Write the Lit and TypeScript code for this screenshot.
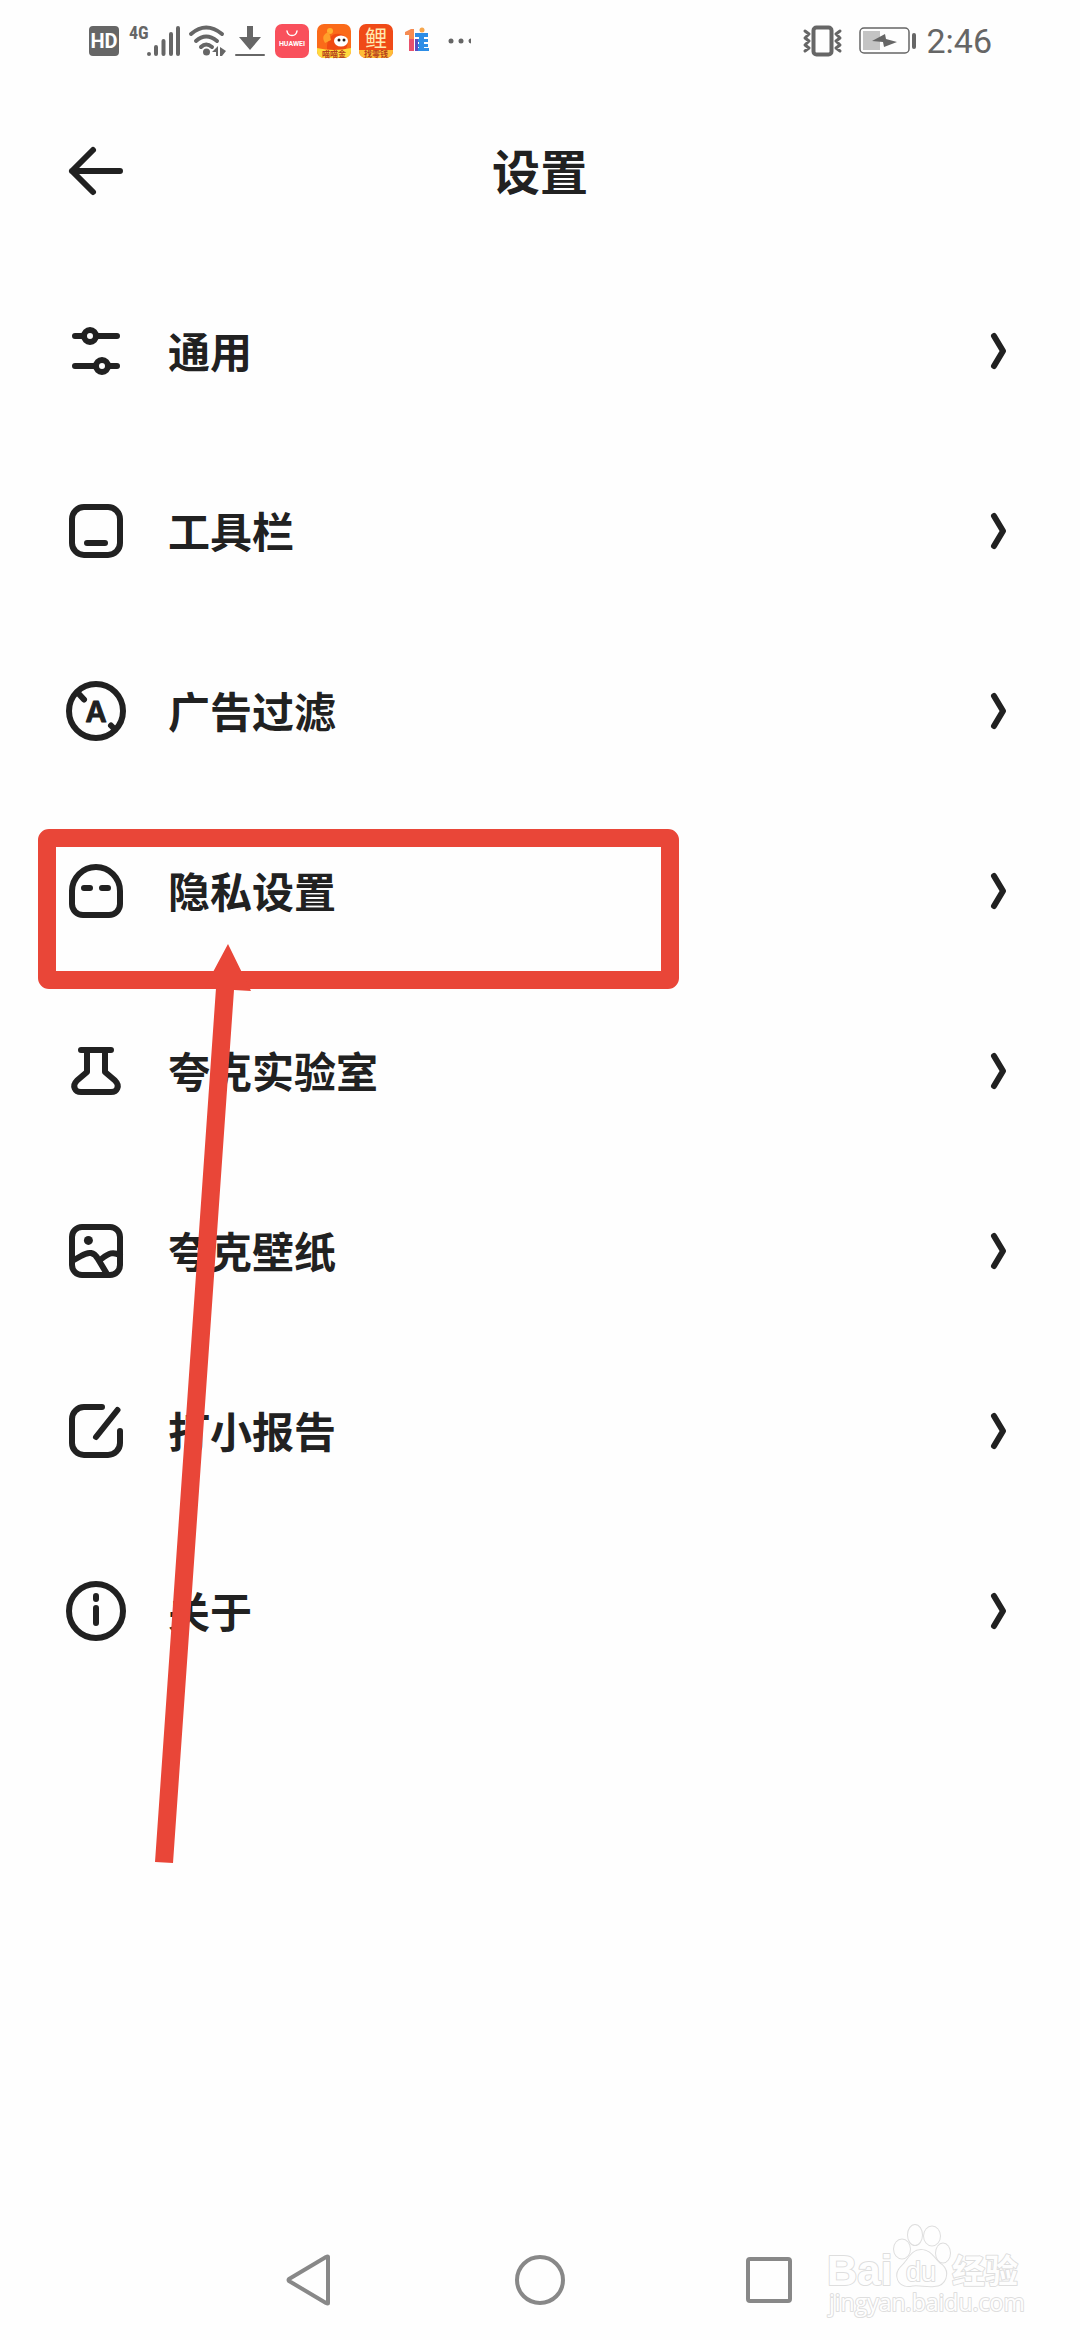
import { LitElement, html, svg, css } from "lit";
import { customElement, property } from "lit/decorators.js";

const icons: Record<string, unknown> = {
  back: svg`<path d="M27 9L6 30L27 51M6 30H54"/>`,
  general: svg`<path d="M9 15H18M30 15H51M9 45H30M42 45H51"/><circle cx="24" cy="15" r="6"/><circle cx="36" cy="45" r="6"/>`,
  toolbar: svg`<rect x="6" y="6" width="48" height="48" rx="12"/><path d="M21 42H39"/>`,
  filter: svg`<circle cx="30" cy="30" r="27"/><path d="M12 12L18 18.500M45 44.500L49 48.500"/><text class="letter" x="30" y="41" text-anchor="middle">A</text>`,
  privacy: svg`<path d="M6 30A24 24 0 0 1 54 30V43A11 11 0 0 1 43 54H17A11 11 0 0 1 6 43ZM18 27H24M36 27H42"/>`,
  lab: svg`<path d="M15 9H45M21 9V31L11 39.500C5.500 45 9 51 15 51H45C51 51 54.500 45 49 39.500L39 31V9"/>`,
  wallpaper: svg`<rect x="6" y="6" width="48" height="48" rx="10"/><circle class="solid" cx="22.400" cy="19.400" r="4.500"/><path d="M7 39.500L15 35C23 30 28 31 32 38L41 53M36 37.500C43 32 47 30.500 54 34"/>`,
  report: svg`<path d="M36 6H18A12 12 0 0 0 6 18V42A12 12 0 0 0 18 54H42A12 12 0 0 0 54 42V30M51.500 9L30 36"/>`,
  about: svg`<circle cx="30" cy="30" r="27"/><path d="M30 15V18M30 27V42"/>`,
};

const items = [
  { icon: "general", label: "通用" },
  { icon: "toolbar", label: "工具栏" },
  { icon: "filter", label: "广告过滤" },
  { icon: "privacy", label: "隐私设置" },
  { icon: "lab", label: "夸克实验室" },
  { icon: "wallpaper", label: "夸克壁纸" },
  { icon: "report", label: "打小报告" },
  { icon: "about", label: "关于" },
];

@customElement("line-icon")
class LineIcon extends LitElement {
  @property() name = "";
  static styles = css`
    :host { display: block; width: 60px; height: 60px; flex: none; }
    .icon { display: block; width: 60px; height: 60px; fill: none; stroke: #212121; stroke-width: 6; stroke-linecap: round; stroke-linejoin: round; }
    .solid { fill: #212121; stroke: none; }
    .letter { font: 600 29px Inter, sans-serif; fill: #212121; stroke-width: 1; }
  `;
  render() {
    return html`<svg class="icon" viewBox="0 0 60 60" aria-hidden="true">${icons[this.name]}</svg>`;
  }
}

@customElement("status-bar")
class StatusBar extends LitElement {
  static styles = css`
    :host { display: block; color: #666; }
    .bar { display: flex; justify-content: space-between; align-items: center; height: 81px; padding: 0 88px; }
    .group { display: flex; align-items: center; gap: 8px; }
    .glyph { display: block; height: 36px; fill: currentColor; overflow: visible; }
    .line { fill: none; stroke: currentColor; stroke-linecap: round; stroke-linejoin: round; }
    .light { color: #fff; }
    .time { font: 400 34px/40px Roboto, sans-serif; }
    .hd { font: 700 20px Roboto, sans-serif; fill: #fff; }
    .net { font: 700 18px "Roboto Condensed", "Liberation Sans Narrow", Roboto, sans-serif; }
    .brand { font: 700 7px Roboto, sans-serif; fill: #fff; }
    .carp { font: 400 22px/22px "Noto Sans CJK TC", sans-serif; fill: #ffe9b0; }
    .tag { font: 700 8px "Noto Sans CJK SC", sans-serif; fill: #b5401c; }
  `;
  render() {
    return html`<div class="bar">
      <div class="group">
        <svg class="glyph" width="32" viewBox="0 0 32 36"><rect x="1" y="3" width="30" height="30" rx="4"/><text class="hd" x="16" y="25" text-anchor="middle">HD</text></svg>
        <svg class="glyph" width="52" viewBox="0 0 52 36"><text class="net" x="1" y="16">4G</text><path class="line" stroke-width="4" d="M21 31V31M28 31V24M35.500 31V18M43 31V11M50 31V5"/></svg>
        <svg class="glyph" width="38" viewBox="0 0 38 36"><path class="line" stroke-width="4" d="M3 11Q18 -2 34 11M8 18Q18 9 29 18M13 24Q18 19 24 24"/><circle cx="18.500" cy="29" r="3.500"/><path d="M24 29L30 23V33H28V29ZM32 24L38 28L34 33H32Z"/></svg>
        <svg class="glyph" width="33" viewBox="0 0 33 36"><path d="M13 3H19V14H27L16 27L5 14H13Z"/><path class="line" stroke-width="2" d="M2 32H30"/></svg>
        <svg class="glyph" width="34" viewBox="0 0 34 36"><rect y="1" width="34" height="34" rx="7" fill="#f9505c"/><path class="line light" stroke-width="1.500" d="M12 8C13 14 21 14 22 8"/><text class="brand" x="17" y="23" text-anchor="middle">HUAWEI</text></svg>
        <svg class="glyph" width="34" viewBox="0 0 34 36"><rect y="1" width="34" height="34" rx="7" fill="#fb6a19"/><path d="M10 27C9 14 17 8 26 12C31 15 32 23 28 27Z" fill="#f04a12"/><circle cx="13" cy="8" r="3" fill="#ffb02e"/><path d="M8 20Q3 12 12 9L14 17Z" fill="#ffa02a"/><ellipse cx="24" cy="18" rx="7" ry="5.500" fill="#fff"/><circle cx="22" cy="17" r="1.500" fill="#2b1b18"/><circle cx="27" cy="17" r="1.500" fill="#2b1b18"/><path d="M0 25Q17 29 34 25V28A7 7 0 0 1 27 35H7A7 7 0 0 1 0 28Z" fill="#ffda3f"/><text class="tag" x="17" y="34" text-anchor="middle">喵喵金</text></svg>
        <svg class="glyph" width="34" viewBox="0 0 34 36"><rect y="1" width="34" height="34" rx="7" fill="#f04a17"/><text class="carp" x="17" y="23" text-anchor="middle">鲤</text><path d="M0 27H34V28A7 7 0 0 1 27 35H7A7 7 0 0 1 0 28Z" fill="#ffbd37"/><text class="tag" x="17" y="34" text-anchor="middle">找零钱</text></svg>
        <svg class="glyph" width="38" viewBox="-4 0 38 36"><path d="M0 9L6 6H9V28H4V12H0Z" fill="#f58b52"/><path d="M4 16H9V28H4Z" fill="#e9516c"/><circle cx="17" cy="7" r="2.500" fill="#f6a64c"/><path d="M10 10H23V14H19V16H23V19H19V21H23V24H19V25H24V28H10V25H14V24H10V21H14V19H10V16H14V14H10Z" fill="#2c8de6"/><path d="M10 16H13V28H10Z" fill="#5b4fc0"/></svg>
        <svg class="glyph" width="26" viewBox="0 0 26 36"><circle cx="4" cy="18" r="2.500"/><circle cx="14" cy="18" r="2.500"/><path d="M24 15.500V20.500A2.500 2.500 0 0 1 24 15.500Z"/></svg>
      </div>
      <div class="group">
        <svg class="glyph" width="42" viewBox="0 0 42 36"><rect class="line" x="11.500" y="4.500" width="18" height="27" rx="3" stroke-width="4"/><path class="line" stroke-width="3" d="M3 8L7 11L3 15L7 18L3 22L7 25L3 28M38 8L34 11L38 15L34 18L38 22L34 25L38 28"/></svg>
        <svg class="glyph" width="66" viewBox="-7 0 66 36"><rect class="line" x="1" y="5" width="49" height="25" rx="4" stroke-width="1.500"/><rect x="4" y="8" width="17" height="19" fill="#c4c4c4"/><path d="M13 18L26 11L27 16L38 19L25 24L24 19Z"/><path class="line" stroke-width="4" d="M55 12V24"/></svg>
        <span class="time">2:46</span>
      </div>
    </div>`;
  }
}

@customElement("site-mark")
class SiteMark extends LitElement {
  static styles = css`
    :host { display: block; }
    .mark { display: block; width: 200px; height: 94px; overflow: visible; fill: #fefefe; stroke: #dedede; stroke-width: 2; stroke-linejoin: round; paint-order: stroke; }
    .bai { font: 700 42px "Liberation Sans", sans-serif; }
    .du { font: 400 27px "Liberation Sans", sans-serif; }
    .cn { font: 700 33px "Noto Sans CJK SC", sans-serif; }
    .url { font: 400 23px "Open Sans", sans-serif; }
  `;
  render() {
    return html`<svg class="mark" viewBox="0 0 200 94" role="img" aria-label="Baidu 经验">
      <text class="bai" x="1" y="61">Bai</text>
      <ellipse cx="76" cy="25" rx="8" ry="9.500"/><ellipse cx="89" cy="11" rx="7" ry="10"/><ellipse cx="106" cy="12" rx="8" ry="9.500"/><ellipse cx="117" cy="29" rx="7" ry="9.500"/>
      <path d="M95 26C106 26 108 36 116 41C124 48 120 62 108 62C100 63 91 60 84 62C71 63 68 50 75 43C82 37 85 26 95 26Z"/>
      <text class="du" x="95" y="57" text-anchor="middle">du</text>
      <text class="cn" x="126" y="59">经验</text>
      <text class="url" x="3" y="87">jingyan.baidu.com</text>
    </svg>`;
  }
}

@customElement("app-root")
class AppRoot extends LitElement {
  static styles = css`
    :host { display: block; background: #fefefe; color: #212121; font-family: "Noto Sans CJK SC", sans-serif; }
    .page { position: relative; display: flex; flex-direction: column; min-height: 100vh; }
    button { border: 0; padding: 0; background: none; color: inherit; font: inherit; cursor: pointer; }
    .header { display: grid; grid-template-columns: 60px 1fr 60px; align-items: center; height: 180px; padding: 0 66px; }
    .title { margin: 0; padding-bottom: 4px; text-align: center; font-size: 48px; line-height: 60px; font-weight: 700; }
    .list { position: relative; }
    .items { margin: 0; padding: 0; list-style: none; }
    .row { display: flex; align-items: center; gap: 42px; width: 100%; height: 180px; padding: 0 66px; text-align: left; }
    .label { flex: 1; padding-bottom: 2px; font-size: 42px; line-height: 60px; font-weight: 700; }
    .chevron { display: block; width: 24px; height: 42px; fill: none; stroke: #212121; stroke-width: 6; stroke-linecap: round; stroke-linejoin: round; }
    .callout { position: absolute; left: 36px; top: 564px; width: 648px; height: 1044px; pointer-events: none; }
    .nav { display: flex; justify-content: center; gap: 170px; height: 120px; margin-top: auto; align-items: center; }
    .shape { display: block; width: 60px; height: 60px; fill: none; stroke: #888; stroke-width: 4; stroke-linejoin: round; }
    .mark { position: absolute; right: 54px; bottom: 22px; }
  `;
  render() {
    return html`<div class="page">
      <status-bar></status-bar>
      <header class="header">
        <button aria-label="返回"><line-icon name="back"></line-icon></button>
        <h1 class="title">设置</h1>
      </header>
      <main class="list">
        <ul class="items">
          ${items.map((item) => html`<li><button class="row">
            <line-icon name=${item.icon}></line-icon>
            <span class="label">${item.label}</span>
            <svg class="chevron" viewBox="0 0 24 42" aria-hidden="true"><path d="M4 6L13 21L4 36"/></svg>
          </button></li>`)}
        </ul>
        <svg class="callout" viewBox="36 825 648 1044" aria-hidden="true">
          <rect x="47" y="838" width="623" height="142" rx="2" fill="none" stroke="#e94638" stroke-width="18" stroke-linejoin="round"/>
          <path d="M228 944L251 991L234 990L173 1863L155 1862L216 988L205 987Z" fill="#e94638"/>
        </svg>
      </main>
      <nav class="nav">
        <button aria-label="后退"><svg class="shape" viewBox="0 0 60 60"><path d="M48 7V53Q48 54 46 53L9 31Q8 30 9 29L46 7Q48 6 48 7Z"/></svg></button>
        <button aria-label="主屏幕"><svg class="shape" viewBox="0 0 60 60"><circle cx="30" cy="30" r="23"/></svg></button>
        <button aria-label="最近任务"><svg class="shape" viewBox="0 0 60 60"><rect x="8" y="9" width="42" height="42" rx="2"/></svg></button>
      </nav>
      <site-mark class="mark"></site-mark>
    </div>`;
  }
}
